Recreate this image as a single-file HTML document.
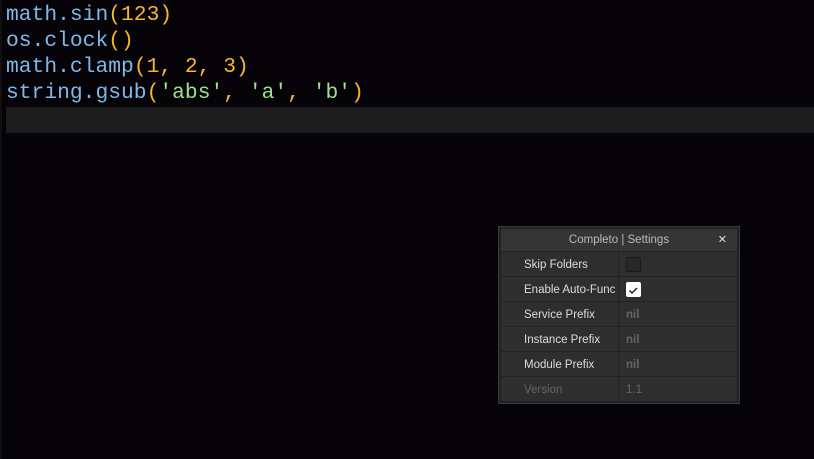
<!DOCTYPE html>
<html><head><style>
body{margin:0;width:814px;height:459px;background:#050307;overflow:hidden;position:relative;font-family:"Liberation Sans",sans-serif}
.code{position:absolute;left:6px;top:2px;font-family:"Liberation Mono",monospace;font-size:21.3px;line-height:26px;color:#7fb8e6;white-space:pre}
.o{color:#f5b62a}.s{color:#9be28a}
.cur{position:absolute;left:6px;top:107px;width:808px;height:26px;background:#1c1c1c}
.edge{position:absolute;left:0;top:0;width:2px;height:459px;background:#101012}
.panel{position:absolute;left:498px;top:226px;width:242px;height:178px;background:#232323;border:1px solid #3a3a3a;box-sizing:border-box}
.title{position:absolute;left:2px;top:2px;width:236px;height:22px;background:#353535;color:#bbb;font-size:11.5px;text-align:center;line-height:23px}
.x{position:absolute;right:10px;top:0;font-size:11px;color:#ddd}
.row{position:absolute;left:2px;width:236px;height:24px;font-size:11.5px;line-height:26px;color:#ddd}
.l{position:absolute;left:0;width:117px;height:24px;background:#2e2e2e;padding-left:23px;box-sizing:border-box}
.v{position:absolute;left:118px;width:118px;height:24px;background:#2e2e2e;padding-left:7px;box-sizing:border-box;color:#666;font-weight:bold}
.cb{position:absolute;left:125px;top:5px;width:15px;height:15px;box-sizing:border-box;border-radius:2px}
</style></head><body>
<div class="edge"></div>
<div class="cur"></div>
<div class="code">math.sin<span class="o">(123)</span>
os.clock<span class="o">()</span>
math.clamp<span class="o">(1, 2, 3)</span>
string.gsub<span class="o">(</span><span class="s">'abs'</span><span class="o">, </span><span class="s">'a'</span><span class="o">, </span><span class="s">'b'</span><span class="o">)</span></div>
<div class="panel">
<div class="title">Completo | Settings<span class="x">✕</span></div>
<div class="row" style="top:25px"><div class="l">Skip Folders</div><div class="v"></div><div class="cb" style="background:#272727;border:1px solid #1a1a1a"></div></div>
<div class="row" style="top:50px"><div class="l">Enable Auto-Func</div><div class="v"></div><div class="cb" style="background:#fff"><svg width="15" height="15" viewBox="0 0 15 15"><path d="M3.5 7.5l2.5 2.5l5-5" stroke="#222" stroke-width="1.5" fill="none"/></svg></div></div>
<div class="row" style="top:75px"><div class="l">Service Prefix</div><div class="v">nil</div></div>
<div class="row" style="top:100px"><div class="l">Instance Prefix</div><div class="v">nil</div></div>
<div class="row" style="top:125px"><div class="l">Module Prefix</div><div class="v">nil</div></div>
<div class="row" style="top:150px"><div class="l" style="color:#666">Version</div><div class="v" style="font-weight:normal">1.1</div></div>
</div>
</body></html>
